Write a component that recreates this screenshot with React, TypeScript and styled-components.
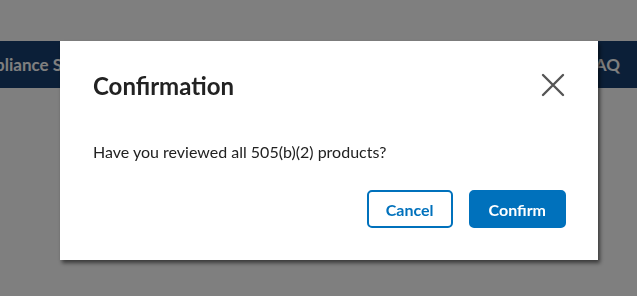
import styled, { createGlobalStyle } from 'styled-components';

const GlobalStyle = createGlobalStyle`
  html, body {
    margin: 0;
    padding: 0;
    background: #ffffff;
    font-family: 'Lato', 'Liberation Sans', sans-serif;
  }
  * { box-sizing: border-box; }
`;

const Page = styled.div`
  width: 637px;
  height: 296px;
  padding-top: 41px;
  overflow: hidden;
`;

const NavBar = styled.nav`
  height: 47px;
  background: #173f70;
  display: flex;
  align-items: center;
  justify-content: space-between;
  overflow: hidden;
  padding-right: 17px;
`;

const NavItem = styled.span<{ $shift?: number }>`
  color: #ffffff;
  font-weight: 700;
  font-size: 17px;
  white-space: nowrap;
  margin-left: ${(p) => p.$shift ?? 0}px;
`;

const Overlay = styled.div`
  position: fixed;
  inset: 0;
  background: rgba(0, 0, 0, 0.5);
  display: flex;
  align-items: flex-start;
  justify-content: flex-start;
  padding: 41px 0 0 60px;
`;

const Modal = styled.div`
  width: 538px;
  height: 219px;
  background: #ffffff;
  box-shadow: 2px 3px 4px rgba(0, 0, 0, 0.55);
  padding: 29px 32px 0 33px;
  display: flex;
  flex-direction: column;
`;

const Header = styled.div`
  display: flex;
  align-items: center;
  justify-content: space-between;
  height: 30px;
`;

const Title = styled.h2`
  margin: 0;
  font-size: 24px;
  font-weight: 700;
  color: #222222;
`;

const CloseButton = styled.button`
  border: none;
  background: none;
  padding: 0;
  width: 26px;
  height: 26px;
  cursor: pointer;
  display: flex;
  align-items: center;
  justify-content: center;
`;

const Body = styled.p`
  margin: 42px 0 0;
  font-size: 16px;
  color: #222222;
`;

const Actions = styled.div`
  display: flex;
  justify-content: flex-end;
  gap: 16px;
  margin-top: 29px;
`;

const Button = styled.button<{ $primary?: boolean }>`
  height: 38px;
  padding: 0 ${(p) => (p.$primary ? 18 : 17)}px;
  border-radius: 5px;
  font-family: 'Lato', 'Liberation Sans', sans-serif;
  font-size: 16px;
  font-weight: 700;
  cursor: pointer;
  border: 2px solid #0071bc;
  background: ${(p) => (p.$primary ? '#0071bc' : '#ffffff')};
  color: ${(p) => (p.$primary ? '#ffffff' : '#0071bc')};
`;

const App = () => {
  return (
    <>
      <GlobalStyle />
      <Page>
        <NavBar>
          <NavItem $shift={-40}>Compliance Search</NavItem>
          <NavItem>FAQ</NavItem>
        </NavBar>
      </Page>
      <Overlay>
        <Modal>
          <Header>
            <Title>Confirmation</Title>
            <CloseButton aria-label="Close">
              <svg width="24" height="24" viewBox="0 0 24 24">
                <path
                  d="M2 2 L22 22 M22 2 L2 22"
                  stroke="#555555"
                  strokeWidth="2.4"
                  strokeLinecap="round"
                />
              </svg>
            </CloseButton>
          </Header>
          <Body>Have you reviewed all 505(b)(2) products?</Body>
          <Actions>
            <Button>Cancel</Button>
            <Button $primary>Confirm</Button>
          </Actions>
        </Modal>
      </Overlay>
    </>
  );
};

export default App;
